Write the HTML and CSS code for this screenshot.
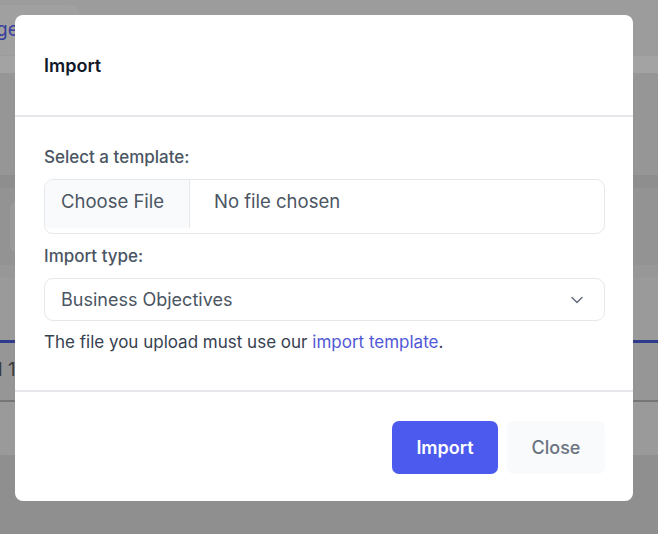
FILE: index.html
```html
<!DOCTYPE html>
<html lang="en">
<head>
<meta charset="utf-8">
<title>Import</title>
<link rel="stylesheet" href="styles.css">
</head>
<body>
<div class="backdrop">
  <div class="band b1"><div class="crumb">ge</div></div>
  <div class="band b2"></div>
  <div class="band b3"></div>
  <div class="band b4"></div>
  <div class="band b5"><div class="ghost-card"></div></div>
  <div class="band b6"></div>
  <div class="band b7"></div>
  <div class="band b8"></div>
  <div class="band b9"><span class="ghost-text">l 1</span></div>
  <div class="band b10"></div>
  <div class="band b11"></div>
  <div class="band b12"></div>
</div>

<div class="modal">
  <div class="modal-header">
    <h3 class="modal-title">Import</h3>
  </div>
  <div class="modal-body">
    <label class="field-label">Select a template:</label>
    <div class="file-input">
      <span class="file-btn">Choose File</span>
      <span class="file-name">No file chosen</span>
    </div>
    <label class="field-label second">Import type:</label>
    <div class="select">
      <span>Business Objectives</span>
      <svg class="chevron" width="16" height="16" viewBox="0 0 16 16" fill="none">
        <path d="M3 5.5l5 5 5-5" stroke="#6b7280" stroke-width="1.6" stroke-linecap="round" stroke-linejoin="round"/>
      </svg>
    </div>
    <p class="help">The file you upload must use our <a href="#" class="link">import template</a>.</p>
  </div>
  <div class="modal-footer">
    <button class="btn btn-primary">Import</button>
    <button class="btn btn-light">Close</button>
  </div>
</div>
</body>
</html>
```

FILE: styles.css
```css
* { box-sizing: border-box; }
html, body { margin: 0; padding: 0; }
body {
  width: 658px;
  height: 534px;
  overflow: hidden;
  font-family: Inter, "Noto Sans", "Liberation Sans", sans-serif;
  background: #999999;
}

.backdrop { display: flex; flex-direction: column; height: 534px; }
.band { width: 100%; flex: none; }
.b1 { height: 56px; background: #9c9c9c; padding-top: 5px; }
.crumb {
  width: 80px; height: 50px;
  background: #a0a0a0;
  border-radius: 0 10px 10px 0;
  color: #3a3f9e;
  font-size: 19px;
  line-height: 50px;
  text-indent: -4px;
}
.b2 { height: 17px; background: #a3a3a3; }
.b3 { height: 102px; background: #969696; }
.b4 { height: 13px; background: #8e8e8e; }
.b5 { height: 77px; background: #939394; padding: 14px 0 0 10px; }
.ghost-card { width: 60px; height: 50px; background: #9a9a9b; border-radius: 6px; }
.b6 { height: 12px; background: #979797; }
.b7 { height: 63px; background: #9a9a9a; }
.b8 { height: 3px; background: #2e3b8c; }
.b9 { height: 57px; background: #969696; padding-top: 15px; }
.ghost-text { color: #3c3c3c; font-size: 19px; margin-left: -2px; }
.b10 { height: 2px; background: #767676; }
.b11 { height: 53px; background: #9a9a9a; }
.b12 { height: 79px; background: #8f8f8f; }

.modal {
  position: absolute;
  left: 15px;
  top: 15px;
  width: 618px;
  height: 486px;
  background: #ffffff;
  border-radius: 8px;
  display: flex;
  flex-direction: column;
}
.modal-header {
  height: 102px;
  padding: 0 29px;
  display: flex;
  align-items: center;
  border-bottom: 2px solid #e5e7eb;
}
.modal-title {
  margin: 0;
  font-size: 18px;
  font-weight: 600;
  color: #111827;
}
.modal-body {
  padding: 28px 28px 36px 29px;
  display: flex;
  flex-direction: column;
  border-bottom: 2px solid #e5e7eb;
}
.field-label {
  display: block;
  font-size: 17px;
  line-height: 24px;
  font-weight: 500;
  color: #4b5563;
  margin-bottom: 10px;
}
.field-label.second { margin-top: 10px; }
.file-input {
  height: 55px;
  border: 1px solid #e5e7eb;
  border-radius: 9px;
  display: flex;
  align-items: flex-start;
  overflow: hidden;
}
.file-btn {
  width: 145px;
  height: 48px;
  background: #f9fafb;
  border-right: 1px solid #e5e7eb;
  font-size: 18.5px;
  line-height: 42px;
  color: #4b5563;
  padding-left: 16px;
}
.file-name {
  font-size: 18.5px;
  line-height: 42px;
  color: #4b5563;
  padding-left: 24px;
}
.select {
  height: 43px;
  border: 1px solid #e5e7eb;
  border-radius: 9px;
  display: flex;
  align-items: center;
  justify-content: space-between;
  padding: 0 19px 0 16px;
  font-size: 18px;
  color: #4b5563;
}
.chevron { display: block; }
.help {
  margin: 9px 0 0;
  font-size: 17px;
  line-height: 24px;
  color: #374151;
}
.link { color: #5158d6; text-decoration: none; }

.modal-footer {
  flex: 1;
  display: flex;
  justify-content: flex-end;
  align-items: flex-start;
  gap: 9px;
  padding: 29px 28px 0 0;
}
.btn {
  height: 53px;
  border-radius: 7px;
  border: none;
  font-family: inherit;
  font-size: 18px;
  font-weight: 500;
}
.btn-primary { width: 106px; background: #4c5bee; color: #ffffff; font-weight: 600; }
.btn-light { width: 98px; background: #f9fafb; color: #6b7280; }
```
